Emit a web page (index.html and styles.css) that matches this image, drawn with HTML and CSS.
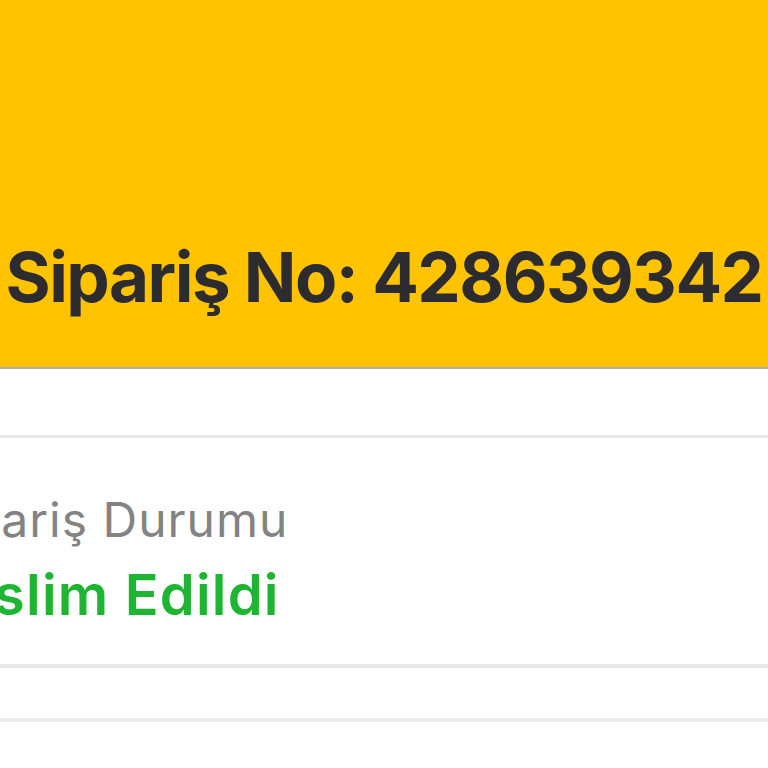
FILE: index.html
```html
<!DOCTYPE html>
<html lang="tr">
<head>
<meta charset="utf-8">
<title>Sipariş Detayı</title>
<link rel="stylesheet" href="styles.css">
</head>
<body>
<header class="header">
  <h1 class="title">Sipariş No: 428639342</h1>
</header>
<div class="spacer"></div>
<section class="status">
  <div class="status-inner">
    <div class="status-label">Sipariş Durumu</div>
    <div class="status-value">Teslim Edildi</div>
  </div>
</section>
<div class="row"></div>
</body>
</html>
```
FILE: styles.css
```css
html, body {
  margin: 0;
  padding: 0;
  background: #ffffff;
  font-family: Inter, "Noto Sans", sans-serif;
  overflow: hidden;
}

.header {
  height: 367px;
  background: #ffc300;
  border-bottom: 2px solid #b3aeae;
  display: flex;
  align-items: flex-end;
  justify-content: center;
}

.title {
  margin: 0 0 48px 0;
  font-size: 69px;
  line-height: 1.2;
  font-weight: 700;
  color: #2c2c30;
  white-space: nowrap;
  letter-spacing: -1.5px;
}

.spacer {
  height: 66px;
  border-bottom: 3px solid #e8e8e8;
}

.status {
  height: 230px;
  border-bottom: 4px solid #e8e8e8;
  box-sizing: border-box;
  overflow: hidden;
}

.status-inner {
  margin-left: -74px;
  padding-top: 53px;
  display: flex;
  flex-direction: column;
  gap: 13px;
  white-space: nowrap;
}

.status-label {
  font-size: 48px;
  line-height: 1.2;
  color: #838383;
  font-weight: 400;
  letter-spacing: 1px;
}

.status-value {
  font-size: 56px;
  line-height: 1.2;
  color: #1db532;
  font-weight: 600;
  letter-spacing: 1.2px;
}

.row {
  height: 50px;
  border-bottom: 4px solid #ebebeb;
}
```
